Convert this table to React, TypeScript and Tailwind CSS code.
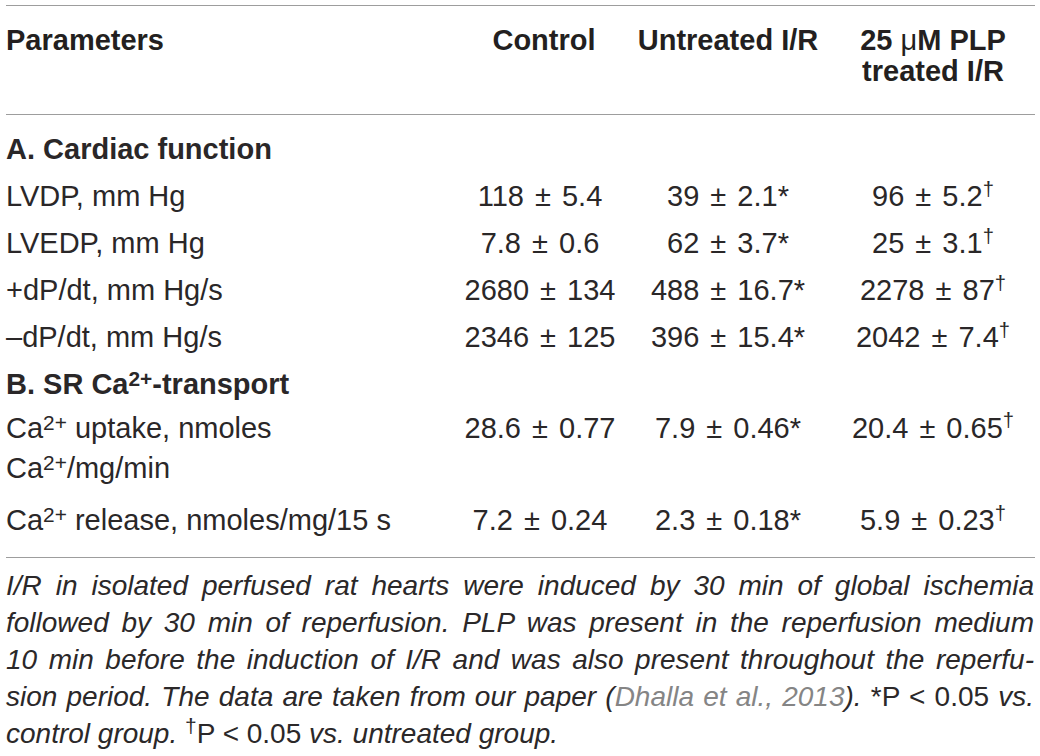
const font = "font-['Liberation_Sans',Arial,sans-serif]";
const cols = "grid grid-cols-[449px_170px_206px_204px]";
const val = "text-center [word-spacing:3px]";

function Ca({ bold = false }: { bold?: boolean }) {
  return (
    <>
      Ca<sup className={`top-[-0.38em] text-[0.72em] ${bold ? "font-bold" : ""}`}>2+</sup>
    </>
  );
}

function Dagger() {
  return <sup className="text-[0.7em]">†</sup>;
}

interface DataRow {
  label: React.ReactNode;
  control: string;
  untreated: string;
  plp: string;
}

const rows: DataRow[] = [
  { label: "LVDP, mm Hg", control: "118 ± 5.4", untreated: "39 ± 2.1*", plp: "96 ± 5.2" },
  { label: "LVEDP, mm Hg", control: "7.8 ± 0.6", untreated: "62 ± 3.7*", plp: "25 ± 3.1" },
  { label: "+dP/dt, mm Hg/s", control: "2680 ± 134", untreated: "488 ± 16.7*", plp: "2278 ± 87" },
  { label: "–dP/dt, mm Hg/s", control: "2346 ± 125", untreated: "396 ± 15.4*", plp: "2042 ± 7.4" },
];

function Row({ label, control, untreated, plp }: DataRow) {
  return (
    <div className={`${cols} h-[47px] pt-[3.5px] leading-[40px]`}>
      <div>{label}</div>
      <div className={val}>{control}</div>
      <div className={val}>{untreated}</div>
      <div className={val}>
        {plp}
        <Dagger />
      </div>
    </div>
  );
}

function Section({ children }: { children: React.ReactNode }) {
  return <div className="h-[47px] pt-[3.5px] leading-[40px] font-bold">{children}</div>;
}

export default function App() {
  return (
    <div className={`min-h-[756px] w-[1040px] bg-white text-[29px] text-[#231f20] ${font}`}>
      <div className="ml-[6px] w-[1029px] pt-[5px]">
        <div className="border-t border-[#9d9d9d]" />

        {/* header */}
        <div className={`${cols} pt-[19px] pb-[27px] leading-[31px] font-bold`}>
          <div>Parameters</div>
          <div className="pl-[8px] text-center">Control</div>
          <div className="text-center">Untreated I/R</div>
          <div className="text-center">
            25 <span className="font-normal">μ</span>M PLP
            <br />
            treated I/R
          </div>
        </div>

        <div className="border-t border-[#9d9d9d]" />

        <div className="pt-[10.5px] text-[#2a2728]">
          <Section>A. Cardiac function</Section>
          {rows.map((r, i) => (
            <Row key={i} {...r} />
          ))}
          <Section>
            B. SR <Ca bold />
            -transport
          </Section>

          <div className={`${cols} leading-[40px]`}>
            <div>
              <Ca /> uptake, nmoles
              <br />
              <Ca />
              /mg/min
            </div>
            <div className={val}>28.6 ± 0.77</div>
            <div className={val}>7.9 ± 0.46*</div>
            <div className={val}>
              20.4 ± 0.65
              <Dagger />
            </div>
          </div>

          <div className={`${cols} pt-[12.5px] pb-[17px] leading-[40px]`}>
            <div>
              <Ca /> release, nmoles/mg/15 s
            </div>
            <div className={val}>7.2 ± 0.24</div>
            <div className={val}>2.3 ± 0.18*</div>
            <div className={val}>
              5.9 ± 0.23
              <Dagger />
            </div>
          </div>
        </div>

        <div className="border-t border-[#9d9d9d]" />

        {/* footnote */}
        <div className="pt-[9px] pr-[1px] text-[28px] text-[#2b2829] italic leading-[37px]">
          <div className="text-justify [text-align-last:justify]">
            I/R in isolated perfused rat hearts were induced by 30 min of global ischemia
          </div>
          <div className="text-justify [text-align-last:justify]">
            followed by 30 min of reperfusion. PLP was present in the reperfusion medium
          </div>
          <div className="text-justify [text-align-last:justify]">
            10 min before the induction of I/R and was also present throughout the reperfu-
          </div>
          <div className="text-justify [text-align-last:justify]">
            sion period. The data are taken from our paper (
            <span className="text-[#858585]">Dhalla et al., 2013</span>).{" "}
            <span className="not-italic">*P &lt; 0.05</span> vs.
          </div>
          <div>
            control group. <span className="not-italic"><sup>†</sup>P &lt; 0.05</span> vs. untreated group.
          </div>
        </div>
      </div>
    </div>
  );
}
